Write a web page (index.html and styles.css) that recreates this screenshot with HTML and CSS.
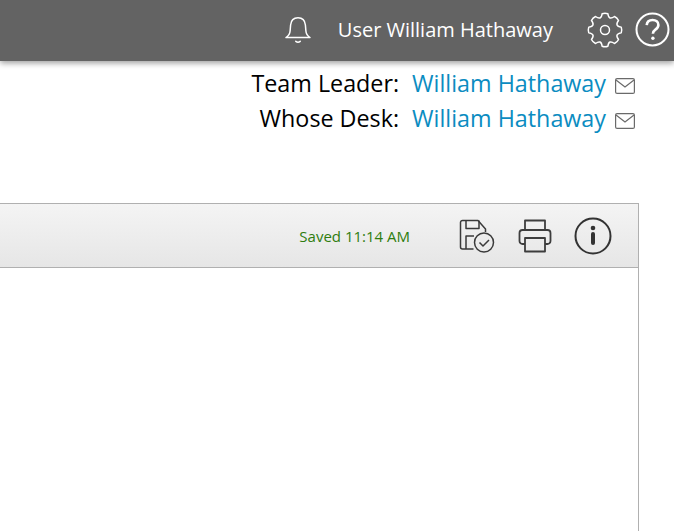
FILE: index.html
```html
<!DOCTYPE html>
<html lang="en">
<head>
<meta charset="utf-8">
<title>Desk</title>
<link rel="stylesheet" href="styles.css">
</head>
<body>
<header class="topbar">
  <svg class="icon bell" viewBox="0 0 26 28" width="26" height="28" fill="none" stroke="#fff" stroke-width="1.5" stroke-linecap="round" stroke-linejoin="round">
    <path d="M1 21.500h24c-2.400-1.600-3.900-3.400-4.100-6.500l-.5-6C20 4.500 17.200 1.700 13 1.700S6 4.500 5.600 9l-.5 6c-.2 3.100-1.700 4.900-4.100 6.500z"/>
    <path d="M10.800 25.300c1.200 1 3.200 1 4.400 0"/>
  </svg>
  <span class="username">User William Hathaway</span>
  <svg class="icon gear" viewBox="0 0 36 36" width="36" height="36" fill="none" stroke="#fff" stroke-width="1.500" stroke-linejoin="round">
    <path d="M34.250 15.130Q35.200 18 34.250 20.870Q27.240 21.830 31.520 27.460Q30.200 30.200 27.460 31.520Q21.830 27.240 20.870 34.250Q18 35.200 15.130 34.250Q14.170 27.240 8.540 31.520Q5.800 30.200 4.480 27.460Q8.760 21.830 1.750 20.870Q.8 18 1.750 15.130Q8.760 14.170 4.480 8.540Q5.800 5.800 8.540 4.480Q14.170 8.760 15.130 1.750Q18 .8 20.870 1.750Q21.830 8.760 27.460 4.480Q30.200 5.800 31.520 8.540Q27.240 14.170 34.250 15.130z"/>
    <circle cx="18" cy="18" r="4.500"/>
  </svg>
  <svg class="icon help" viewBox="0 0 35 35" width="35" height="35" fill="none" stroke="#fff">
    <circle cx="17.500" cy="17.500" r="16" stroke-width="2"/>
    <path d="M11.700 13.200c.3-3.300 2.700-5.200 5.900-5.200 3.300 0 5.800 2 5.800 4.900 0 2.300-1.300 3.500-3 4.700-1.700 1.200-2.500 2-2.500 4.200" stroke-width="2.600"/>
    <circle cx="17.900" cy="26.300" r="1.700" fill="#fff" stroke="none"/>
  </svg>
</header>

<section class="contacts">
  <div class="contact">
    <span class="label">Team Leader:</span>
    <a class="person" href="#">William Hathaway</a>
    <svg class="mail" viewBox="0 0 20 16" width="20" height="16" fill="none" stroke="#6a6a6a" stroke-width="1.200">
      <rect x=".6" y=".6" width="18.800" height="14.800" rx="1.500"/>
      <path d="M1 2l9 7 9-7"/>
    </svg>
  </div>
  <div class="contact">
    <span class="label">Whose Desk:</span>
    <a class="person" href="#">William Hathaway</a>
    <svg class="mail" viewBox="0 0 20 16" width="20" height="16" fill="none" stroke="#6a6a6a" stroke-width="1.200">
      <rect x=".6" y=".6" width="18.800" height="14.800" rx="1.500"/>
      <path d="M1 2l9 7 9-7"/>
    </svg>
  </div>
</section>

<main class="panel">
  <div class="toolbar">
    <span class="saved">Saved 11:14 AM</span>
    <svg class="tool save" viewBox="0 0 36 34" width="36" height="34" fill="none" stroke="#3a3a3a" stroke-width="1.500" stroke-linejoin="round">
      <path d="M14.500 30H3.500A2 2 0 0 1 1.500 28V3.500a2 2 0 0 1 2-2h15.500l7.500 8.500v3"/>
      <path d="M7 1.500v8h13v-8"/>
      <path d="M15 17H7v13"/>
      <circle cx="25" cy="23.500" r="9.500"/>
      <path d="M20.500 23.500l3.500 3.500 6-6"/>
    </svg>
    <svg class="tool print" viewBox="0 0 34 34" width="34" height="34" fill="none" stroke="#3d3d3d" stroke-width="1.800" stroke-linejoin="round">
      <path d="M7 11V1.500h20V11"/>
      <path d="M7 25H4.500A3 3 0 0 1 1.500 22v-8a3 3 0 0 1 3-3h25a3 3 0 0 1 3 3v8a3 3 0 0 1-3 3H27"/>
      <rect x="7" y="19" width="20" height="13.500"/>
    </svg>
    <svg class="tool info" viewBox="0 0 38 38" width="38" height="38" fill="none" stroke="#333">
      <circle cx="19" cy="19" r="17.500" stroke-width="2"/>
      <circle cx="19" cy="11" r="2.300" fill="#333" stroke="none"/>
      <path d="M19 17v9" stroke-width="4" stroke-linecap="round"/>
    </svg>
  </div>
</main>
</body>
</html>
```
FILE: styles.css
```css
html, body {
  margin: 0;
  height: 100%;
  overflow: hidden;
  background: #fff;
  font-family: "Open Sans", sans-serif;
}

body {
  display: flex;
  flex-direction: column;
}

.topbar {
  flex: none;
  height: 61px;
  box-sizing: border-box;
  display: flex;
  align-items: center;
  justify-content: flex-end;
  padding: 0 4px 2px 0;
  background: #636363;
  color: #fff;
  box-shadow: 0 2px 6px rgba(0, 0, 0, .4);
  position: relative;
}

.icon {
  display: block;
  flex: none;
}

.bell {
  margin-right: 27px;
}

.username {
  font-size: 20px;
  line-height: 27px;
  font-weight: 500;
  margin-right: 34px;
}

.gear {
  margin-right: 12px;
}

.contacts {
  flex: none;
  height: 142px;
  box-sizing: border-box;
  padding: 4px 39px 0 0;
  display: flex;
  flex-direction: column;
  align-items: flex-end;
}

.contact {
  display: flex;
  align-items: center;
  height: 35px;
  font-size: 23.300px;
}

.label {
  color: #000;
  margin-right: 13px;
}

.person {
  color: #0b8cc1;
  text-decoration: none;
  margin-right: 9px;
}

.mail {
  display: block;
  margin-top: 6px;
}

.panel {
  flex: 1;
  margin-left: -1px;
  width: 640px;
  box-sizing: border-box;
  border: 1px solid #b0b0b0;
  border-bottom: 0;
  background: #fff;
}

.toolbar {
  height: 64px;
  box-sizing: border-box;
  border-bottom: 1px solid #b0b0b0;
  background: linear-gradient(#f4f4f4, #e6e6e6);
  display: flex;
  align-items: center;
  justify-content: flex-end;
  padding-right: 26px;
}

.saved {
  font-size: 15px;
  color: #2f7d0e;
  margin-right: 49px;
}

.tool {
  display: block;
  flex: none;
}

.save {
  margin-right: 23px;
}

.print {
  margin-right: 22px;
}
```
